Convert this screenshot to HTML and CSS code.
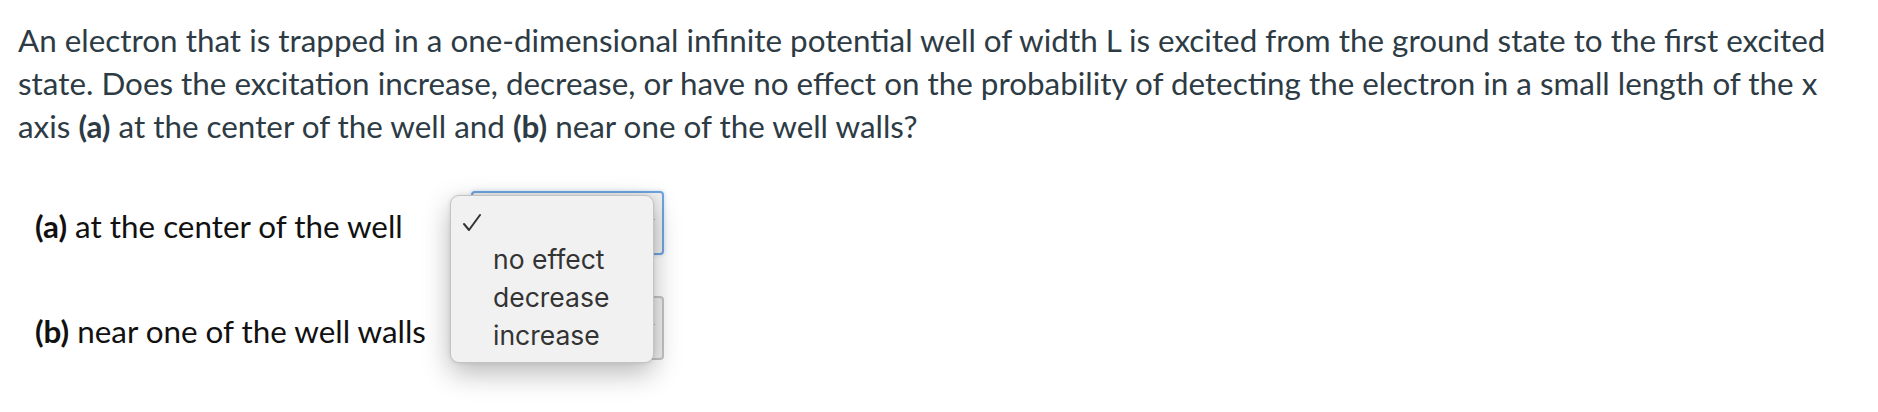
FILE: index.html
```html
<!DOCTYPE html>
<html lang="en">
<head>
    <meta charset="UTF-8">
    <title>Question</title>
    <link rel="stylesheet" href="styles.css">
</head>
<body>
<div class="question">
    <p class="text">An electron that is trapped in a one-dimensional infinite potential well of width L is excited from the ground state to the first excited state. Does the excitation increase, decrease, or have no effect on the probability of detecting the electron in a small length of the x axis <b>(a)</b> at the center of the well and <b>(b)</b> near one of the well walls?</p>

    <div class="answers">
        <div class="row">
            <div class="label"><b>(a)</b> at the center of the well</div>
            <div class="pick">
                <div class="select focus">
                    <svg class="chev" width="8" height="6" viewBox="0 0 8 6"><path d="M1 1 L4 5 L7 1" fill="none" stroke="#333" stroke-width="1.5"/></svg>
                </div>
                <!-- open list -->
                <ul class="menu">
                    <li class="on">
                        <svg class="tick" width="18" height="18" viewBox="0 0 18 18"><polyline points="1,10 6,16 17,1" fill="none" stroke="#333" stroke-width="2" stroke-linecap="round" stroke-linejoin="round"/></svg>
                    </li>
                    <li>no effect</li>
                    <li>decrease</li>
                    <li>increase</li>
                </ul>
            </div>
        </div>
        <div class="row">
            <div class="label"><b>(b)</b> near one of the well walls</div>
            <div class="pick">
                <div class="select">
                    <svg class="chev" width="8" height="6" viewBox="0 0 8 6"><path d="M1 1 L4 5 L7 1" fill="none" stroke="#333" stroke-width="1.5"/></svg>
                </div>
            </div>
        </div>
    </div>
</div>
</body>
</html>
```

FILE: styles.css
```css
* {
    margin: 0;
    padding: 0;
    list-style: none;
    box-sizing: border-box;
}

html,
body {
    min-height: 412px;
}

body {
    background: #fff;
    font-family: Lato, "Open Sans", sans-serif;
}

.question {
    padding: 19px 18px 49px 18px;
    width: 1856px;
}

.text {
    font-size: 31.4px;
    line-height: 43px;
    color: #2d3b45;
}

.answers {
    display: flex;
    flex-direction: column;
    gap: 41px;
    padding: 43px 0 0 17px;
}

.row {
    display: flex;
    align-items: center;
}

.label {
    flex: 0 0 436px;
    font-size: 31.4px;
    line-height: 43px;
    color: #111;
    padding-top: 6px;
}

.pick {
    position: relative;
}

.select {
    width: 193px;
    height: 64px;
    border: 2px solid #c4c4c4;
    border-radius: 4px;
    background: #efefef;
    display: flex;
    align-items: center;
    justify-content: flex-end;
    padding-right: 7px;
}

.select.focus {
    border-color: #6fa3dd;
    box-shadow: 0 0 4px rgba(90, 150, 220, .35);
}

.chev {
    margin-top: -4px;
}

.menu {
    position: absolute;
    z-index: 10;
    left: -21px;
    top: 4px;
    width: 204px;
    padding: 6px 0 8px 0;
    background: #f1f1f1;
    border: 1px solid #c4c4c4;
    border-radius: 9px;
    box-shadow: 0 10px 28px rgba(0, 0, 0, .28), 0 0 4px rgba(0, 0, 0, .1);
    font-family: Inter, "Liberation Sans", sans-serif;
    font-size: 26.5px;
    color: #333;
}

.menu li {
    height: 38px;
    line-height: 38px;
    padding-left: 42px;
    position: relative;
}

.menu .tick {
    position: absolute;
    left: 12px;
    top: 12px;
}
```
